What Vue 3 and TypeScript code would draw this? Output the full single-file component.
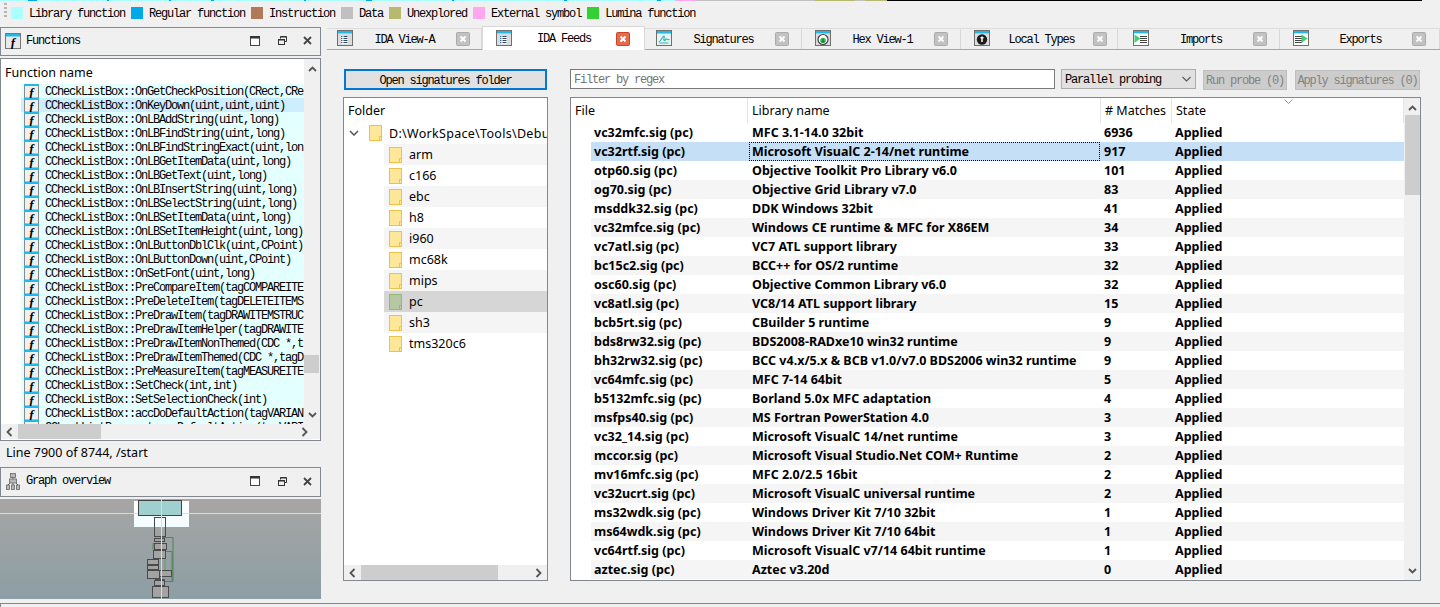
<script setup lang="ts">
const stripSegments: { w: number; c: string }[] = [
  { w: 28, c: '#aaffff' }, { w: 9, c: '#00a8e8' }, { w: 70, c: '#aaffff' }, { w: 2, c: '#00a8e8' },
  { w: 60, c: '#aaffff' }, { w: 2, c: '#00a8e8' }, { w: 40, c: '#aaffff' }, { w: 3, c: '#00a8e8' },
  { w: 90, c: '#aaffff' }, { w: 2, c: '#00a8e8' }, { w: 60, c: '#aaffff' }, { w: 6, c: '#00a8e8' },
  { w: 80, c: '#aaffff' }, { w: 2, c: '#00a8e8' }, { w: 110, c: '#aaffff' }, { w: 3, c: '#00a8e8' },
  { w: 90, c: '#aaffff' }, { w: 4, c: '#00a8e8' }, { w: 14, c: '#aaffff' }, { w: 20, c: '#ffa8f0' },
  { w: 120, c: '#c0c0c0' }, { w: 40, c: '#b8b86e' }, { w: 10, c: '#c0c0c0' }, { w: 22, c: '#b8b86e' },
  { w: 535, c: '#000000' },
]
const legend = [
  { c: '#aaffff', t: 'Library function' },
  { c: '#00a8e8', t: 'Regular function' },
  { c: '#b07a5a', t: 'Instruction' },
  { c: '#c0c0c0', t: 'Data' },
  { c: '#b8b86e', t: 'Unexplored' },
  { c: '#ffa8f0', t: 'External symbol' },
  { c: '#33d133', t: 'Lumina function' },
]
const P = 'CCheckListBox::'
const functions = [
  'OnGetCheckPosition(CRect,CRe', 'OnKeyDown(uint,uint,uint)', 'OnLBAddString(uint,long)',
  'OnLBFindString(uint,long)', 'OnLBFindStringExact(uint,lon', 'OnLBGetItemData(uint,long)',
  'OnLBGetText(uint,long)', 'OnLBInsertString(uint,long)', 'OnLBSelectString(uint,long)',
  'OnLBSetItemData(uint,long)', 'OnLBSetItemHeight(uint,long)', 'OnLButtonDblClk(uint,CPoint)',
  'OnLButtonDown(uint,CPoint)', 'OnSetFont(uint,long)', 'PreCompareItem(tagCOMPAREITE',
  'PreDeleteItem(tagDELETEITEMS', 'PreDrawItem(tagDRAWITEMSTRUC',
  'PreDrawItemHelper(tagDRAWITE', 'PreDrawItemNonThemed(CDC *,t',
  'PreDrawItemThemed(CDC *,tagD', 'PreMeasureItem(tagMEASUREITE',
  'SetCheck(int,int)', 'SetSelectionCheck(int)', 'accDoDefaultAction(tagVARIAN',
  'get_accDefaultAction(tagVARI',
].map((s) => P + s)

type TabIcon = 'list' | 'sig' | 'hex' | 'types' | 'imports' | 'exports'
const tabs: { t: string; w: number; pl: number; pr: number; icon: TabIcon; active?: boolean }[] = [
  { t: 'IDA View-A', w: 155, pl: 10, pr: 11, icon: 'list' },
  { t: 'IDA Feeds', w: 163, pl: 13, pr: 14, icon: 'list', active: true },
  { t: 'Signatures', w: 157, pl: 11, pr: 12, icon: 'sig' },
  { t: 'Hex View-1', w: 159, pl: 13, pr: 12, icon: 'hex' },
  { t: 'Local Types', w: 157, pl: 13, pr: 10, icon: 'types' },
  { t: 'Imports', w: 162, pl: 15, pr: 12, icon: 'imports' },
  { t: 'Exports', w: 160, pl: 13, pr: 13, icon: 'exports' },
]
const folders = ['arm', 'c166', 'ebc', 'h8', 'i960', 'mc68k', 'mips', 'pc', 'sh3', 'tms320c6']
const rows: [string, string, number][] = [
  ['vc32mfc.sig (pc)', 'MFC 3.1-14.0 32bit', 6936],
  ['vc32rtf.sig (pc)', 'Microsoft VisualC 2-14/net runtime', 917],
  ['otp60.sig (pc)', 'Objective Toolkit Pro Library v6.0', 101],
  ['og70.sig (pc)', 'Objective Grid Library v7.0', 83],
  ['msddk32.sig (pc)', 'DDK Windows 32bit', 41],
  ['vc32mfce.sig (pc)', 'Windows CE runtime & MFC for X86EM', 34],
  ['vc7atl.sig (pc)', 'VC7 ATL support library', 33],
  ['bc15c2.sig (pc)', 'BCC++ for OS/2 runtime', 32],
  ['osc60.sig (pc)', 'Objective Common Library v6.0', 32],
  ['vc8atl.sig (pc)', 'VC8/14 ATL support library', 15],
  ['bcb5rt.sig (pc)', 'CBuilder 5 runtime', 9],
  ['bds8rw32.sig (pc)', 'BDS2008-RADxe10 win32 runtime', 9],
  ['bh32rw32.sig (pc)', 'BCC v4.x/5.x & BCB v1.0/v7.0 BDS2006 win32 runtime', 9],
  ['vc64mfc.sig (pc)', 'MFC 7-14 64bit', 5],
  ['b5132mfc.sig (pc)', 'Borland 5.0x MFC adaptation', 4],
  ['msfps40.sig (pc)', 'MS Fortran PowerStation 4.0', 3],
  ['vc32_14.sig (pc)', 'Microsoft VisualC 14/net runtime', 3],
  ['mccor.sig (pc)', 'Microsoft Visual Studio.Net COM+ Runtime', 2],
  ['mv16mfc.sig (pc)', 'MFC 2.0/2.5 16bit', 2],
  ['vc32ucrt.sig (pc)', 'Microsoft VisualC universal runtime', 2],
  ['ms32wdk.sig (pc)', 'Windows Driver Kit 7/10 32bit', 1],
  ['ms64wdk.sig (pc)', 'Windows Driver Kit 7/10 64bit', 1],
  ['vc64rtf.sig (pc)', 'Microsoft VisualC v7/14 64bit runtime', 1],
  ['aztec.sig (pc)', 'Aztec v3.20d', 0],
]
const graphBoxes: [number, number, number, number][] = [
  [154.5, 18.5, 11, 19], [154.5, 39.5, 10, 3], [154.5, 44.5, 12, 6], [153.5, 51.5, 12, 8],
  [147.5, 60.5, 11, 5], [147.5, 66.5, 11, 4], [147.5, 71.5, 12, 8], [159.5, 71.5, 12, 6],
  [154.5, 81.5, 10, 5], [152.5, 87.5, 16, 11],
]
</script>

<template>
  <div class="app">
    <div class="strip">
      <i v-for="(s, i) in stripSegments" :key="i" :style="{ width: s.w + 'px', background: s.c }"></i>
    </div>
    <div class="legend">
      <span class="grip"></span>
      <span v-for="l in legend" :key="l.t" class="legend-item">
        <i class="swatch" :style="{ background: l.c }"></i><span class="legend-text">{{ l.t }}</span>
      </span>
    </div>

    <div class="main">
      <aside class="left">
        <header class="dock-head">
          <svg class="dock-icon" width="16" height="16" viewBox="0 0 16 16">
            <rect x=".5" y=".5" width="15" height="15" fill="#e9e9e9" stroke="#777" />
            <rect x="1" y="1" width="14" height="2.5" fill="#1fb9ea" />
            <text x="8" y="14" class="f-glyph" font-size="13" text-anchor="middle">f</text>
          </svg>
          <span class="mono dock-title">Functions</span>
          <span class="win-btns">
            <svg width="10" height="10" viewBox="0 0 10 10"><rect x=".5" y=".5" width="9" height="9" fill="#fff" stroke="#444" /><rect y="0" width="10" height="2.5" fill="#333" /></svg>
            <svg class="win-restore" width="9" height="9" viewBox="0 0 9 9"><path d="M2.5 2.5V.5h6v5h-2" fill="none" stroke="#333" /><rect x=".5" y="3.5" width="6" height="5" fill="#f0f0f0" stroke="#333" /><path d="M2.5 1h6M0 4h7" stroke="#333" /></svg>
            <svg class="win-close" width="9" height="9" viewBox="0 0 9 9"><path d="M1 1l7 7M8 1L1 8" stroke="#444" stroke-width="1.8" /></svg>
          </span>
        </header>

        <section class="fn-pane">
          <div class="fn-body">
            <div class="fn-main">
              <div class="pane-title fn-title">Function name</div>
              <div class="fn-list">
                <div v-for="(f, i) in functions" :key="i" class="fn-row" :class="{ hl: i === 1 }">
                  <svg class="fn-icon" width="15" height="14" viewBox="0 0 15 14">
                    <rect x=".5" y="0" width="14" height="14" fill="#f0f0f0" stroke="#888" />
                    <rect x="0" y="0" width="15" height="2" fill="#1fb9ea" />
                    <text x="7.5" y="12.5" class="f-glyph" font-size="13" text-anchor="middle">f</text>
                  </svg>
                  <span class="mono fn-text">{{ f }}</span>
                </div>
              </div>
            </div>
            <div class="vbar fn-vbar">
              <svg class="chev" width="9" height="6" viewBox="0 0 9 6"><path d="M1 5l3.5-3.5L8 5" fill="none" stroke="#555" stroke-width="1.8" /></svg>
              <span class="fn-thumb"></span>
              <svg class="chev" width="9" height="6" viewBox="0 0 9 6"><path d="M1 1l3.5 3.5L8 1" fill="none" stroke="#555" stroke-width="1.8" /></svg>
            </div>
          </div>
          <div class="hbar">
            <svg width="7" height="10" viewBox="0 0 7 10"><path d="M5.5 1L1.5 5l4 4" fill="none" stroke="#555" stroke-width="1.8" /></svg>
            <span class="fn-hthumb"></span>
            <svg width="7" height="10" viewBox="0 0 7 10"><path d="M1.5 1l4 4-4 4" fill="none" stroke="#555" stroke-width="1.8" /></svg>
          </div>
        </section>

        <div class="status">Line 7900 of 8744, /start</div>

        <header class="dock-head graph-head">
          <svg class="dock-icon" width="14" height="17" viewBox="0 0 14 17">
            <g fill="#b8b8b8" stroke="#666" stroke-width=".8">
              <rect x="4.5" y=".5" width="5" height="4" />
              <rect x="3.5" y="6" width="7" height="4" />
              <rect x=".5" y="12" width="3" height="4.5" />
              <rect x="5.5" y="12" width="3" height="4.5" />
              <rect x="10.5" y="12" width="3" height="4.5" />
            </g>
            <path d="M7 4.5V6M7 10v2M2 12l2-2M12 12l-2-2" stroke="#666" fill="none" />
          </svg>
          <span class="mono dock-title">Graph overview</span>
          <span class="win-btns">
            <svg width="10" height="10" viewBox="0 0 10 10"><rect x=".5" y=".5" width="9" height="9" fill="#fff" stroke="#444" /><rect y="0" width="10" height="2.5" fill="#333" /></svg>
            <svg class="win-restore" width="9" height="9" viewBox="0 0 9 9"><path d="M2.5 2.5V.5h6v5h-2" fill="none" stroke="#333" /><rect x=".5" y="3.5" width="6" height="5" fill="#f0f0f0" stroke="#333" /><path d="M2.5 1h6M0 4h7" stroke="#333" /></svg>
            <svg class="win-close" width="9" height="9" viewBox="0 0 9 9"><path d="M1 1l7 7M8 1L1 8" stroke="#444" stroke-width="1.8" /></svg>
          </span>
        </header>

        <svg class="graph" width="321" height="100" viewBox="0 0 321 100">
          <defs>
            <linearGradient id="gbg" x1="0" y1="0" x2="0" y2="1">
              <stop offset="0" stop-color="#a7a6a4" />
              <stop offset="1" stop-color="#8c9ea5" />
            </linearGradient>
            <linearGradient id="wbg" x1="0" y1="0" x2="0" y2="1">
              <stop offset="0" stop-color="#ffffff" />
              <stop offset="1" stop-color="#f2fcff" />
            </linearGradient>
          </defs>
          <rect width="321" height="100" fill="url(#gbg)" />
          <rect x="134" y="2" width="55" height="26" fill="url(#wbg)" />
          <path d="M0 14.5h321" stroke="#f5ee2a" />
          <rect x="138.5" y="1.5" width="43" height="15" fill="#9fcfcf" stroke="#444" />
          <g fill="none" stroke-width="1">
            <path d="M160 38.5h13v44h-12M153 50.5v-6h10M160 52.5h12v30" stroke="#4f8456" />
            <path d="M165 59V72" stroke="#6a9a6e" />
            <path d="M160 60v-1h-4M153 65v2M155 70v1" stroke="#a53838" />
            <path d="M153 70v2M155 80.5h10M160 79v2" stroke="#3a4bb0" />
          </g>
          <rect v-for="(b, i) in graphBoxes" :key="i" :x="b[0]" :y="b[1]" :width="b[2]" :height="b[3]" :fill="i === 0 ? 'none' : '#a3a3a3'" stroke="#4a4a4a" />
          <path d="M161.5 0v100" stroke="#f5ee2a" />
        </svg>
      </aside>

      <div class="right">
        <nav class="tabs">
          <div v-for="t in tabs" :key="t.t" class="tab" :class="{ active: t.active }" :style="{ width: t.w + 'px', paddingLeft: t.pl + 'px', paddingRight: t.pr + 'px' }">
            <svg class="tab-icon" width="16" height="16" viewBox="0 0 16 16">
              <rect x=".5" y=".5" width="15" height="15" :fill="t.icon === 'imports' || t.icon === 'exports' ? '#fff' : '#dcdcdc'" stroke="#6f6f6f" />
              <rect x="1" y="1" width="14" height="2.4" fill="#1fb9ea" />
              <template v-if="t.icon === 'list'">
                <path d="M5 6h6v8H5z" fill="#fff" />
                <path d="M6.5 6.500h4M6.5 8.500h4M6.5 10.500h4M6.5 12.500h4" stroke="#2a4a66" />
                <path d="M4 6.500h1.500M4 8.500h1.500M4 10.500h1.500M4 12.500h1.500" stroke="#3a6fb0" />
              </template>
              <template v-else-if="t.icon === 'sig'">
                <path d="M1 4h14v11H1z" fill="#e8f4f4" />
                <path d="M3 12c2-1 3.500-6 5-6 .8 0-1 5 .5 4.500s1-2 2-1.500 1 1 3 .5M3.500 13h9" fill="none" stroke="#35b8a8" stroke-width="1.200" />
              </template>
              <template v-else-if="t.icon === 'hex'">
                <circle cx="8" cy="9.500" r="5" fill="#fff" stroke="#444" stroke-width="1.200" />
                <circle cx="8" cy="10.500" r="2.800" fill="#3fb55f" />
                <path d="M8 8.500v3.500M6.500 11l1.500 1.500 1.500-1.500" fill="none" stroke="#146b2e" />
              </template>
              <template v-else-if="t.icon === 'types'">
                <circle cx="8" cy="9.500" r="5.200" fill="#1a1a1a" />
                <path d="M8 6.500v5.500M6.500 7.800h3" stroke="#fff" stroke-width="1.500" />
              </template>
              <template v-else-if="t.icon === 'imports'">
                <path d="M7 6.500h7M7 8.500h7M7 10.500h7M7 12.500h7" stroke="#444" />
                <path d="M1.500 4.500L7.500 8.500 1.500 13z" fill="#3fd06f" />
              </template>
              <template v-else>
                <path d="M2 6.500h7M2 8.500h7M2 10.500h7M2 12.500h7" stroke="#444" />
                <path d="M8.500 4.500L14.500 8.500 8.500 13z" fill="#3fd06f" />
              </template>
            </svg>
            <span class="mono tab-text">{{ t.t }}</span>
            <svg class="tab-close" width="14" height="14" viewBox="0 0 14 14">
              <rect x=".5" y=".5" width="13" height="13" rx="1" :fill="t.active ? '#e96a4a' : '#c2c2c2'" :stroke="t.active ? '#c4472b' : '#ababab'" />
              <path d="M4.500 4.500l5 5M9.500 4.500l-5 5" stroke="#fff" stroke-width="2" />
            </svg>
          </div>
        </nav>

        <div class="feeds">
          <div class="toolbar">
            <button class="open-btn mono" type="button">Open signatures folder</button>
            <div class="filter mono">Filter by regex</div>
            <div class="combo mono">
              <span class="combo-text">Parallel probing</span>
              <svg width="9" height="6" viewBox="0 0 9 6"><path d="M.5 1l4 4 4-4" fill="none" stroke="#555" stroke-width="1.100" /></svg>
            </div>
            <button class="dis-btn mono run" type="button">Run probe (0)</button>
            <button class="dis-btn mono apply" type="button">Apply signatures (0)</button>
          </div>

          <div class="panes">
            <section class="tree-pane">
              <div class="pane-title tree-title">Folder</div>
              <div class="tree">
                <div class="root-row">
                  <svg class="tree-chev" width="10" height="6" viewBox="0 0 10 6"><path d="M1 1l4 4 4-4" fill="none" stroke="#555" stroke-width="1.500" /></svg>
                  <svg class="folder" width="13" height="16" viewBox="0 0 13 16"><rect x=".5" y=".5" width="12" height="15" fill="#ffe79a" stroke="#e9c34a" /><path d="M10.500 15.500v-4h2" fill="none" stroke="#e9c34a" /></svg>
                  <span class="root-text">D:\WorkSpace\Tools\Debu</span>
                </div>
                <div v-for="(f, i) in folders" :key="f" class="tree-row" :class="{ alt: i % 2 === 0, sel: f === 'pc' }">
                  <svg class="folder" width="13" height="16" viewBox="0 0 13 16"><rect x=".5" y=".5" width="12" height="15" :fill="f === 'pc' ? '#b5c7a3' : '#ffe79a'" :stroke="f === 'pc' ? '#9db37a' : '#e9c34a'" /><path d="M10.500 15.500v-4h2" fill="none" :stroke="f === 'pc' ? '#9db37a' : '#e9c34a'" /></svg>
                  <span>{{ f }}</span>
                </div>
              </div>
              <div class="hbar tree-hbar">
                <svg width="7" height="10" viewBox="0 0 7 10"><path d="M5.500 1L1.500 5l4 4" fill="none" stroke="#555" stroke-width="1.800" /></svg>
                <span class="tree-thumb"></span>
                <svg width="7" height="10" viewBox="0 0 7 10"><path d="M1.500 1l4 4-4 4" fill="none" stroke="#555" stroke-width="1.800" /></svg>
              </div>
            </section>

            <section class="table-pane">
              <div class="table-main">
                <div class="thead">
                  <span class="th c-file">File</span>
                  <span class="th c-lib">Library name</span>
                  <span class="th c-num"># Matches</span>
                  <span class="th c-state">State</span>
                  <svg class="sort" width="9" height="5" viewBox="0 0 9 5"><path d="M.5.500l4 4 4-4" fill="none" stroke="#999" /></svg>
                </div>
                <div class="tbody">
                  <div v-for="(r, i) in rows" :key="r[0]" class="tr" :class="{ odd: i % 2 === 1, cur: i === 1 }">
                    <span class="c-file">{{ r[0] }}</span>
                    <span class="c-lib" :class="{ focus: i === 1 }">{{ r[1] }}</span>
                    <span class="c-num">{{ r[2] }}</span>
                    <span class="c-state">Applied</span>
                  </div>
                </div>
              </div>
              <div class="vbar table-vbar">
                <svg class="chev" width="9" height="6" viewBox="0 0 9 6"><path d="M1 5l3.500-3.500L8 5" fill="none" stroke="#555" stroke-width="1.800" /></svg>
                <span class="table-thumb"></span>
                <svg class="chev" width="9" height="6" viewBox="0 0 9 6"><path d="M1 1l3.500 3.500L8 1" fill="none" stroke="#555" stroke-width="1.800" /></svg>
              </div>
            </section>
          </div>
        </div>
      </div>
    </div>

    <div class="bottom"></div>
  </div>
</template>

<style>
html, body { margin: 0; background: #f0f0f0; overflow: hidden; }
</style>

<style scoped>
.app {
  width: 1440px;
  height: 607px;
  overflow: hidden;
  background: #f0f0f0;
  color: #000;
  font-family: "Noto Sans", "Open Sans", sans-serif;
  font-size: 12.5px;
  display: flex;
  flex-direction: column;
}
.mono {
  font-family: "Liberation Mono", monospace;
  font-size: 12px;
  letter-spacing: -1.2px;
  white-space: pre;
}
.strip { height: 1px; display: flex; flex: none; }
.strip i { display: block; height: 1px; flex: none; }
.legend {
  flex: none;
  height: 26px;
  display: flex;
  align-items: center;
  gap: 6px;
  padding: 0 0 2px 11px;
  box-sizing: border-box;
  position: relative;
  font-family: "Liberation Mono", monospace;
  font-size: 12px;
  letter-spacing: -1.2px;
  white-space: pre;
}
.grip {
  position: absolute;
  left: 4px;
  top: 2px;
  width: 3px;
  height: 14px;
  background: repeating-linear-gradient(to bottom, #b5b5b5 0 2px, transparent 2px 4px);
}
.legend-item { display: flex; align-items: center; }
.legend-text { padding-top: 2px; }
.swatch { width: 12px; height: 12px; margin-right: 6px; display: block; flex: none; }

.main { flex: none; height: 576px; display: flex; }
.left { width: 321px; flex: none; display: flex; flex-direction: column; }
.dock-head {
  height: 29px;
  box-sizing: border-box;
  border: 1px solid #828790;
  display: flex;
  align-items: center;
  padding: 0 8px 2px 4px;
  width: 321px;
  flex: none;
}
.dock-icon { flex: none; margin-right: 5px; }
.graph-head { height: 30px; }
.graph-head .dock-icon { margin-right: 6px; margin-left: 1px; }
.win-btns { margin-left: auto; display: flex; align-items: center; }
.win-restore { margin-left: 18px; }
.win-close { margin-left: 16px; }
.fn-pane {
  margin-top: 2px;
  height: 383px;
  box-sizing: border-box;
  border: 1px solid #828790;
  background: #fff;
  display: flex;
  flex-direction: column;
  flex: none;
  width: 321px;
}
.fn-body { height: 365px; display: flex; flex: none; }
.fn-main { width: 303px; flex: none; overflow: hidden; }
.pane-title { white-space: nowrap; }
.fn-title { height: 25px; line-height: 27px; padding-left: 4px; }
.fn-list { margin-left: 20px; height: 340px; overflow: hidden; }
.fn-row {
  height: 14px;
  display: flex;
  background: #e3ffff;
  align-items: center;
  overflow: hidden;
}
.fn-row.hl { background: #cceeff; }
.fn-icon { flex: none; margin-left: 3px; }
.fn-text { margin-left: 6px; line-height: 16px; padding-top: 2px; }
.f-glyph { font-family: "Liberation Serif", serif; font-style: italic; font-weight: 700; fill: #000; }
.vbar {
  width: 16px;
  flex: none;
  background: #f0f0f0;
  display: flex;
  flex-direction: column;
  align-items: center;
  position: relative;
}
.fn-vbar .chev:first-child { margin-top: 7px; }
.fn-thumb {
  position: absolute;
  left: 0;
  right: 1px;
  top: 296px;
  height: 18px;
  background: #cdcdcd;
}
.fn-vbar .chev:last-child { margin-top: auto; margin-bottom: 6px; }
.hbar {
  height: 15px;
  flex: none;
  background: #f0f0f0;
  display: flex;
  align-items: center;
  padding: 0 12px 0 5px;
  box-sizing: border-box;
}
.hbar svg:last-child { margin-left: auto; }
.fn-hthumb { width: 83px; height: 15px; background: #cdcdcd; margin-left: 5px; }
.status { height: 26px; line-height: 23px; padding-left: 6px; flex: none; box-sizing: border-box; }
.graph { display: block; margin-top: 2px; flex: none; }

.right { flex: 1; min-width: 0; padding-left: 6px; box-sizing: border-box; display: flex; flex-direction: column; }
.tabs {
  height: 23px;
  flex: none;
  display: flex;
  align-items: stretch;
  border-bottom: 1px solid #a8a8a8;
  box-sizing: border-box;
}
.tab {
  flex: none;
  box-sizing: border-box;
  margin-top: 1px;
  border-top: 1px solid #dcdcdc;
  border-right: 1px solid #d8d8d8;
  display: flex;
  align-items: center;
  justify-content: space-between;
  padding-bottom: 2px;
}
.tab-text { padding-top: 4px; }
.tab-close { margin-top: 2px; }
.tab.active {
  background: #fff;
  margin-top: -1px;
  margin-bottom: -1px;
  border: 1px solid #d8d8d8;
  border-bottom: none;
  position: relative;
}
.tab.active .tab-text { padding-top: 2px; }
.tab-icon, .tab-close { flex: none; }

.feeds { flex: 1; min-height: 0; padding: 19px 19px 0 16px; box-sizing: border-box; display: flex; flex-direction: column; }
.toolbar { display: flex; align-items: flex-start; height: 22px; flex: none; }
.open-btn {
  width: 203px;
  height: 21px;
  margin-left: 1px;
  box-sizing: border-box;
  border: 2px solid #0078d7;
  background: #e1e1e1;
  padding: 2px 0 0;
  color: #000;
  cursor: default;
}
.filter {
  width: 485px;
  height: 20px;
  margin-left: 23px;
  box-sizing: border-box;
  border: 1px solid #7a7a7a;
  background: #fff;
  color: #757575;
  line-height: 20px;
  padding-left: 3px;
}
.combo {
  width: 135px;
  height: 20px;
  margin-left: 6px;
  box-sizing: border-box;
  border: 1px solid #adadad;
  background: #e1e1e1;
  display: flex;
  align-items: center;
  justify-content: space-between;
  padding: 0 4px 0 3px;
}
.combo-text { padding-top: 1px; }
.dis-btn {
  height: 20px;
  margin-top: 1px;
  box-sizing: border-box;
  border: 1px solid #bfbfbf;
  background: #cccccc;
  color: #838383;
  padding: 2px 0 0;
  cursor: default;
}
.run { width: 84px; margin-left: 7px; }
.apply { width: 125px; margin-left: 8px; }

.panes { margin-top: 6px; display: flex; height: 484px; flex: none; }
.tree-pane {
  width: 205px;
  flex: none;
  box-sizing: border-box;
  border: 1px solid #828790;
  background: #fff;
  display: flex;
  flex-direction: column;
}
.tree-title { height: 24px; line-height: 25px; padding-left: 4px; flex: none; }
.tree { height: 442px; flex: none; overflow: hidden; }
.root-row { height: 22px; display: flex; align-items: center; white-space: nowrap; overflow: hidden; padding-left: 5px; }
.tree-chev { flex: none; margin-right: 10px; }
.root-row .folder { margin-right: 7px; }
.folder { flex: none; }
.root-text { flex: none; letter-spacing: 0.3px; }
.tree-row { height: 21px; margin-left: 40px; display: flex; align-items: center; padding-left: 5px; gap: 7px; }
.tree-row.alt { background: #f5f5f5; }
.tree-row.sel { background: #d6d6d6; }
.tree-hbar { margin-top: auto; padding: 0 5px 0 5px; height: 15px; }
.tree-thumb { width: 137px; height: 15px; background: #cdcdcd; margin-left: 5px; }

.table-pane {
  width: 851px;
  margin-left: 22px;
  flex: none;
  box-sizing: border-box;
  border: 1px solid #828790;
  background: #fff;
  display: flex;
}
.table-main { width: 833px; flex: none; overflow: hidden; }
.thead { height: 25px; display: flex; position: relative; }
.th { line-height: 25px; box-sizing: border-box; border-right: 1px solid #e5e5e5; height: 25px; }
.c-file { width: 177px; flex: none; box-sizing: border-box; }
.c-lib { width: 353px; flex: none; box-sizing: border-box; white-space: nowrap; overflow: hidden; }
.c-num { width: 71px; flex: none; box-sizing: border-box; }
.c-state { flex: 1; box-sizing: border-box; }
.thead .c-file { padding-left: 4px; }
.thead .c-lib { padding-left: 4px; }
.thead .c-num { padding-left: 4px; }
.thead .c-state { padding-left: 4px; }
.sort { position: absolute; left: 713px; top: 1px; }
.tr {
  height: 19px;
  margin-left: 20px;
  display: flex;
  align-items: center;
  font-weight: 700;
  line-height: 19px;
}
.tr.odd { background: #f5f5f5; }
.tr.cur { background: #c4dff6; }
.tr .c-file { width: 158px; padding-left: 3px; }
.tr .c-lib { width: 351px; padding-left: 3px; height: 19px; }
.tr .c-lib.focus { border: 1px dotted #000; line-height: 17px; padding-left: 2px; }
.tr .c-num { padding-left: 4px; }
.tr .c-state { padding-left: 4px; }
.table-vbar { flex: 1; width: auto; }
.table-vbar .chev:first-child { margin-top: 7px; }
.table-thumb { position: absolute; left: 1px; right: 0; top: 17px; height: 80px; background: #cdcdcd; }
.table-vbar .chev:last-child { margin-top: auto; margin-bottom: 6px; }

.bottom {
  flex: none;
  height: 10px;
  box-sizing: border-box;
  border-top: 1px solid #828790;
  border-left: 1px solid #828790;
  background: #f0f0f0;
}
</style>
